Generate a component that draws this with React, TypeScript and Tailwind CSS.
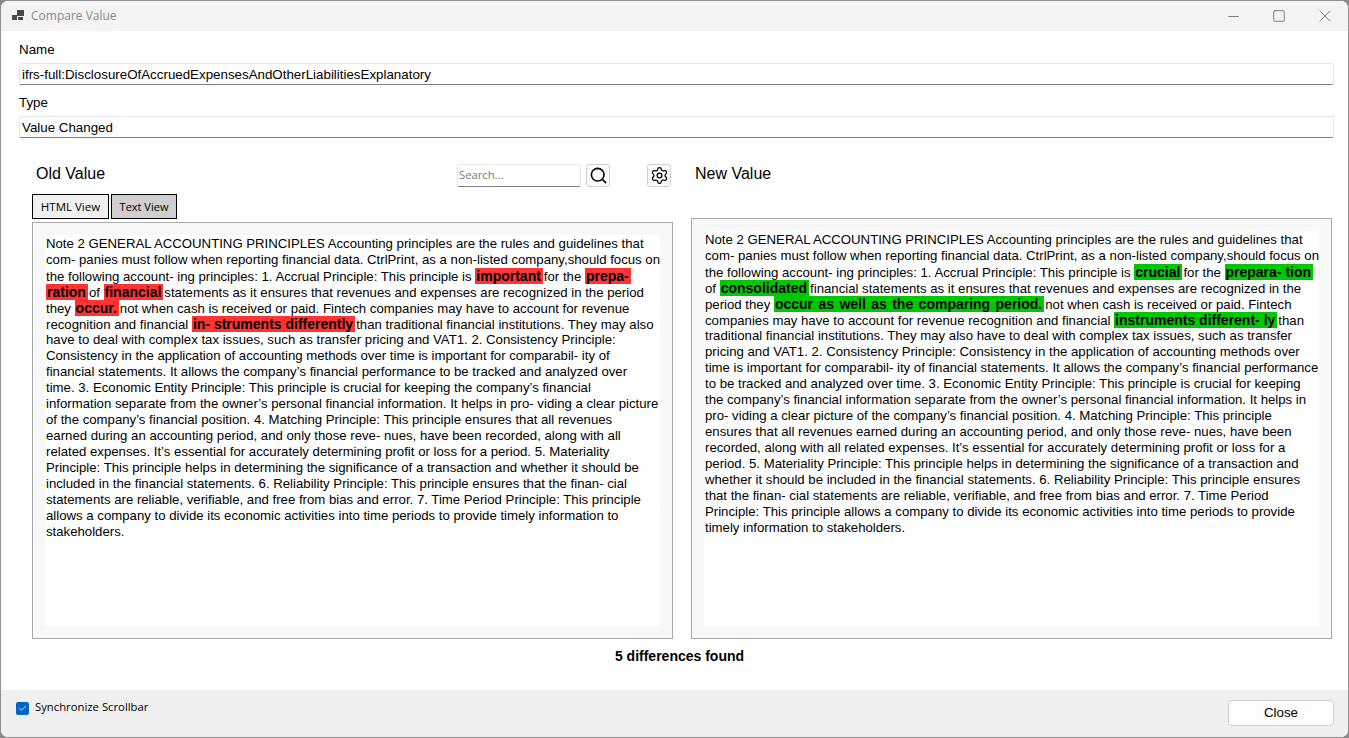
import React from 'react';
import { Search, Settings, Minus, Square, X, Check } from 'lucide-react';

type Seg = string | { m: string; wide?: boolean };

const oldLines: Seg[][] = [
  ['Note 2 GENERAL ACCOUNTING PRINCIPLES Accounting principles are the rules and guidelines that'],
  ['com- panies must follow when reporting financial data. CtrlPrint, as a non-listed company,should focus on'],
  ['the following account- ing principles: 1. Accrual Principle: This principle is ', { m: 'important' }, 'for the ', { m: 'prepa-' }],
  [{ m: 'ration' }, 'of ', { m: 'financial' }, 'statements as it ensures that revenues and expenses are recognized in the period'],
  ['they ', { m: 'occur.' }, 'not when cash is received or paid. Fintech companies may have to account for revenue'],
  ['recognition and financial ', { m: 'in- struments differently' }, 'than traditional financial institutions. They may also'],
  ['have to deal with complex tax issues, such as transfer pricing and VAT1. 2. Consistency Principle:'],
  ['Consistency in the application of accounting methods over time is important for comparabil- ity of'],
  ['financial statements. It allows the company’s financial performance to be tracked and analyzed over'],
  ['time. 3. Economic Entity Principle: This principle is crucial for keeping the company’s financial'],
  ['information separate from the owner’s personal financial information. It helps in pro- viding a clear picture'],
  ['of the company’s financial position. 4. Matching Principle: This principle ensures that all revenues'],
  ['earned during an accounting period, and only those reve- nues, have been recorded, along with all'],
  ['related expenses. It’s essential for accurately determining profit or loss for a period. 5. Materiality'],
  ['Principle: This principle helps in determining the significance of a transaction and whether it should be'],
  ['included in the financial statements. 6. Reliability Principle: This principle ensures that the finan- cial'],
  ['statements are reliable, verifiable, and free from bias and error. 7. Time Period Principle: This principle'],
  ['allows a company to divide its economic activities into time periods to provide timely information to'],
  ['stakeholders.'],
];

const newLines: Seg[][] = [
  ['Note 2 GENERAL ACCOUNTING PRINCIPLES Accounting principles are the rules and guidelines that'],
  ['com- panies must follow when reporting financial data. CtrlPrint, as a non-listed company,should focus on'],
  ['the following account- ing principles: 1. Accrual Principle: This principle is ', { m: 'crucial' }, 'for the ', { m: 'prepara- tion' }],
  ['of ', { m: 'consolidated' }, 'financial statements as it ensures that revenues and expenses are recognized in the'],
  ['period they ', { m: 'occur as well as the comparing period.', wide: true }, 'not when cash is received or paid. Fintech'],
  ['companies may have to account for revenue recognition and financial ', { m: 'instruments different- ly' }, 'than'],
  ['traditional financial institutions. They may also have to deal with complex tax issues, such as transfer'],
  ['pricing and VAT1. 2. Consistency Principle: Consistency in the application of accounting methods over'],
  ['time is important for comparabil- ity of financial statements. It allows the company’s financial performance'],
  ['to be tracked and analyzed over time. 3. Economic Entity Principle: This principle is crucial for keeping'],
  ['the company’s financial information separate from the owner’s personal financial information. It helps in'],
  ['pro- viding a clear picture of the company’s financial position. 4. Matching Principle: This principle'],
  ['ensures that all revenues earned during an accounting period, and only those reve- nues, have been'],
  ['recorded, along with all related expenses. It’s essential for accurately determining profit or loss for a'],
  ['period. 5. Materiality Principle: This principle helps in determining the significance of a transaction and'],
  ['whether it should be included in the financial statements. 6. Reliability Principle: This principle ensures'],
  ['that the finan- cial statements are reliable, verifiable, and free from bias and error. 7. Time Period'],
  ['Principle: This principle allows a company to divide its economic activities into time periods to provide'],
  ['timely information to stakeholders.'],
];

function DocPanel({ lines, mark, className }: { lines: Seg[][]; mark: string; className: string }) {
  return (
    <div className={`border border-[#a9a9a9] bg-[#f8f8f8] p-3 ${className}`}>
      <div className="h-full bg-white pt-px text-[13.2px] leading-4 text-black whitespace-pre overflow-hidden">
        {lines.map((line, i) => (
          <div key={i} className="h-4 pl-px">
            {line.map((seg, j) =>
              typeof seg === 'string' ? (
                <span key={j}>{seg}</span>
              ) : (
                <span
                  key={j}
                  className={`mr-px inline-block h-4 pl-px pr-[2px] text-[14px] font-bold ${mark} ${seg.wide ? '[word-spacing:1.5px]' : ''}`}
                >
                  {seg.m}
                </span>
              ),
            )}
          </div>
        ))}
      </div>
    </div>
  );
}

function Field({ label, value, top }: { label: string; value: string; top: string }) {
  return (
    <div className={top}>
      <div className="text-[13.33px] leading-4 text-black">{label}</div>
      <div className="mt-[5px] h-[22px] rounded-[2px] border border-[#e6e6e6] border-b-[#7f7f7f] pl-[2px] pt-px text-[13.33px] leading-[20px] text-black">
        {value}
      </div>
    </div>
  );
}

export default function App() {
  return (
    <div className="h-[738px] w-[1349px] bg-[#8a8a8a] font-['Liberation_Sans',Arial,sans-serif]">
      <div className="flex h-full flex-col overflow-hidden rounded-[8px] border border-[#8f8f8f] bg-white">
        <div className="flex h-[30px] items-center bg-[#f3f3f3] pl-[10px]">
          <svg width="14" height="14" viewBox="0 0 14 14" className="fill-[#4a4a4a]">
            <rect x="1" y="6" width="5" height="5" />
            <rect x="6" y="1" width="7" height="6" />
            <rect x="7" y="8" width="5" height="3" />
          </svg>
          <span className="ml-[6px] font-['Open_Sans',sans-serif] text-[12px] text-[#8a8a8a]">Compare Value</span>
          <div className="ml-auto flex items-center text-[#808080]">
            <span className="flex w-[46px] justify-center"><Minus size={17} strokeWidth={1} absoluteStrokeWidth /></span>
            <span className="flex w-[46px] justify-center"><Square size={14} strokeWidth={1} absoluteStrokeWidth /></span>
            <span className="flex w-[46px] justify-center"><X size={20} strokeWidth={1} absoluteStrokeWidth /></span>
          </div>
        </div>

        <div className="flex flex-1 flex-col pl-[18px] pr-[14px]">
          <Field label="Name" value="ifrs-full:DisclosureOfAccruedExpensesAndOtherLiabilitiesExplanatory" top="pt-[11px]" />
          <Field label="Type" value="Value Changed" top="pt-[10px]" />

          <div className="mt-[22px] flex flex-1 gap-[18px] pl-[13px] pr-[1px]">
            <div className="flex w-[641px] flex-col">
              <div className="flex h-[34px] items-start">
                <span className="mt-[5px] shrink-0 whitespace-nowrap pl-[4px] text-[16px] leading-[18px] text-black">Old Value</span>
                <div className="ml-auto mt-[4px] flex items-start pr-[2px]">
                  <div className="flex h-[23px] w-[124px] items-center rounded-[2px] border border-[#e6e6e6] border-b-[#7f7f7f] pl-px font-['Open_Sans',sans-serif] text-[11.25px] text-[#7a7a7a]">
                    Search...
                  </div>
                  <button className="ml-[5px] flex h-[23px] w-[24px] shrink-0 items-center justify-center rounded-[3px] border border-[#d0d0d0] bg-[#fbfbfb]">
                    <Search size={19} strokeWidth={2} className="text-black" />
                  </button>
                  <button className="ml-[37px] flex h-[23px] w-[24px] shrink-0 items-center justify-center rounded-[3px] border border-[#d0d0d0] bg-[#fbfbfb]">
                    <Settings size={19} strokeWidth={1.6} className="text-black" />
                  </button>
                </div>
              </div>
              <div className="flex gap-[2px]">
                <button className="h-[25px] w-[77px] border border-black bg-[#f0f0f0] font-['Open_Sans',sans-serif] text-[11.5px] text-black">
                  HTML View
                </button>
                <button className="h-[25px] w-[66px] border border-black bg-[#cfcfcf] pt-[2px] font-['Open_Sans',sans-serif] text-[11px] text-black">
                  Text View
                </button>
              </div>
              <DocPanel lines={oldLines} mark="bg-[#ff3333]" className="mt-[3px] flex-1" />
            </div>

            <div className="flex w-[641px] flex-col">
              <div className="h-[58px] pl-[4px] pt-[5px] text-[16px] leading-[18px] text-black">New Value</div>
              <DocPanel lines={newLines} mark="bg-[#00c800]" className="flex-1" />
            </div>
          </div>

          <div className="mt-[9px] h-[42px] pl-[6px] text-center text-[14px] font-bold leading-4 text-black">5 differences found</div>
        </div>

        <div className="flex h-[47px] items-start bg-[#f0f0f0] pl-[15px] pr-[14px]">
          <div className="mt-[10px] flex h-4 w-[13px] items-center">
            <span className="flex h-[13px] w-[13px] items-center justify-center rounded-[2px] bg-[#0067c0]">
              <Check size={9} strokeWidth={2} className="text-white" />
            </span>
          </div>
          <span className="ml-[6px] mt-[9px] font-['Open_Sans',sans-serif] text-[11.3px] leading-4 text-black">Synchronize Scrollbar</span>
          <button className="ml-auto mt-[10px] h-[26px] w-[106px] rounded-[4px] border border-[#d0d0d0] bg-[#fdfdfd] text-[13.33px] text-black">
            Close
          </button>
        </div>
      </div>
    </div>
  );
}
